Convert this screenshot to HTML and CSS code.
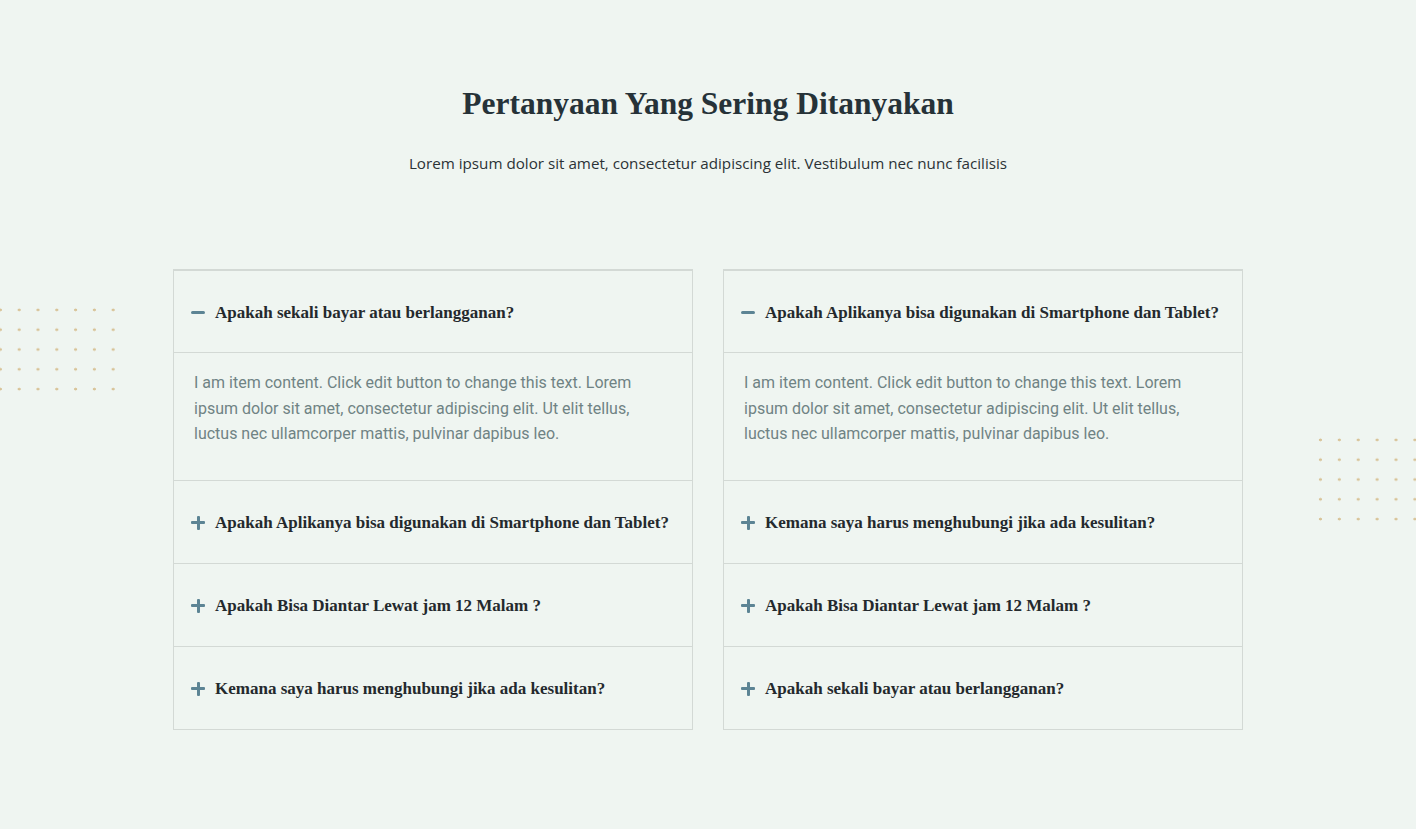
FILE: index.html
```html
<!DOCTYPE html>
<html lang="id">
<head>
<meta charset="utf-8">
<title>FAQ</title>
<link rel="stylesheet" href="styles.css">
</head>
<body>
<section class="faq">
  <div class="dots dots-left"></div>
  <div class="dots dots-right"></div>
  <header class="faq-head">
    <h1 class="faq-title">Pertanyaan Yang Sering Ditanyakan</h1>
    <p class="faq-sub">Lorem ipsum dolor sit amet, consectetur adipiscing elit. Vestibulum nec nunc facilisis</p>
  </header>
  <div class="faq-grid">
    <div class="accordion">
      <div class="item open">
        <div class="q"><span class="ico minus"></span><span>Apakah sekali bayar atau berlangganan?</span></div>
        <div class="a">I am item content. Click edit button to change this text. Lorem ipsum dolor sit amet, consectetur adipiscing elit. Ut elit tellus, luctus nec ullamcorper mattis, pulvinar dapibus leo.</div>
      </div>
      <div class="item"><div class="q"><span class="ico plus"></span><span>Apakah Aplikanya bisa digunakan di Smartphone dan Tablet?</span></div></div>
      <div class="item"><div class="q"><span class="ico plus"></span><span>Apakah Bisa Diantar Lewat jam 12 Malam ?</span></div></div>
      <div class="item"><div class="q"><span class="ico plus"></span><span>Kemana saya harus menghubungi jika ada kesulitan?</span></div></div>
    </div>
    <div class="accordion">
      <div class="item open">
        <div class="q"><span class="ico minus"></span><span>Apakah Aplikanya bisa digunakan di Smartphone dan Tablet?</span></div>
        <div class="a">I am item content. Click edit button to change this text. Lorem ipsum dolor sit amet, consectetur adipiscing elit. Ut elit tellus, luctus nec ullamcorper mattis, pulvinar dapibus leo.</div>
      </div>
      <div class="item"><div class="q"><span class="ico plus"></span><span>Kemana saya harus menghubungi jika ada kesulitan?</span></div></div>
      <div class="item"><div class="q"><span class="ico plus"></span><span>Apakah Bisa Diantar Lewat jam 12 Malam ?</span></div></div>
      <div class="item"><div class="q"><span class="ico plus"></span><span>Apakah sekali bayar atau berlangganan?</span></div></div>
    </div>
  </div>
</section>
</body>
</html>
```
FILE: styles.css
```css
* { box-sizing: border-box; }
html, body { margin: 0; padding: 0; }
body {
  background: #eff5f1;
  font-family: "Liberation Sans", Arial, sans-serif;
  color: #2a3035;
  width: 1416px;
  height: 829px;
  overflow: hidden;
}
.faq {
  position: relative;
  padding-top: 84px;
}
.faq-head { text-align: center; }
.faq-title {
  margin: 0;
  font-family: "Liberation Serif", "Times New Roman", serif;
  font-weight: 700;
  font-size: 31.5px;
  line-height: 40px;
  color: #263238;
}
.faq-sub {
  margin: 28px 0 0;
  font-family: "Open Sans", "Liberation Sans", sans-serif;
  font-size: 15.2px;
  line-height: 22px;
  color: #2b3236;
}
.faq-grid {
  display: grid;
  grid-template-columns: 520px 520px;
  gap: 30px;
  justify-content: center;
  margin-top: 95px;
}
.accordion {
  border: 1px solid #d3d9d5;
  border-top-width: 2px;
}
.item + .item { border-top: 1px solid #d3d9d5; }
.q {
  height: 82px;
  display: flex;
  align-items: center;
  gap: 10px;
  padding-left: 16px;
  padding-top: 1px;
  font-family: "Liberation Serif", "Times New Roman", serif;
  font-weight: 700;
  font-size: 17px;
  color: #24292d;
}
.item.open .q { border-bottom: 1px solid #d3d9d5; padding-top: 2px; }
.ico {
  position: relative;
  width: 15px;
  height: 15px;
  flex: none;
}
.ico::before, .ico::after {
  content: "";
  position: absolute;
  background: #5c8494;
  border-radius: 1px;
}
.ico::before { left: 1px; right: 0; top: 6px; height: 3px; }
.plus::after { top: 1px; bottom: 0; left: 7px; width: 3px; }
.minus::before { border-radius: 2px; }
.a {
  padding: 17px 20px 32px 20px;
  font-family: Roboto, "Liberation Sans", sans-serif;
  font-size: 16px;
  line-height: 25.5px;
  color: #6f8384;
  height: 127px;
}
.dots {
  position: absolute;
  background-image: radial-gradient(circle, #d8c398 1.3px, transparent 1.6px);
}
.dots-left {
  left: -9px;
  top: 300px;
  width: 133px;
  height: 99px;
  background-size: 18.8px 19.8px;
}
.dots-right {
  left: 1311px;
  top: 430px;
  width: 120px;
  height: 99px;
  background-size: 18.9px 19.8px;
}
```
